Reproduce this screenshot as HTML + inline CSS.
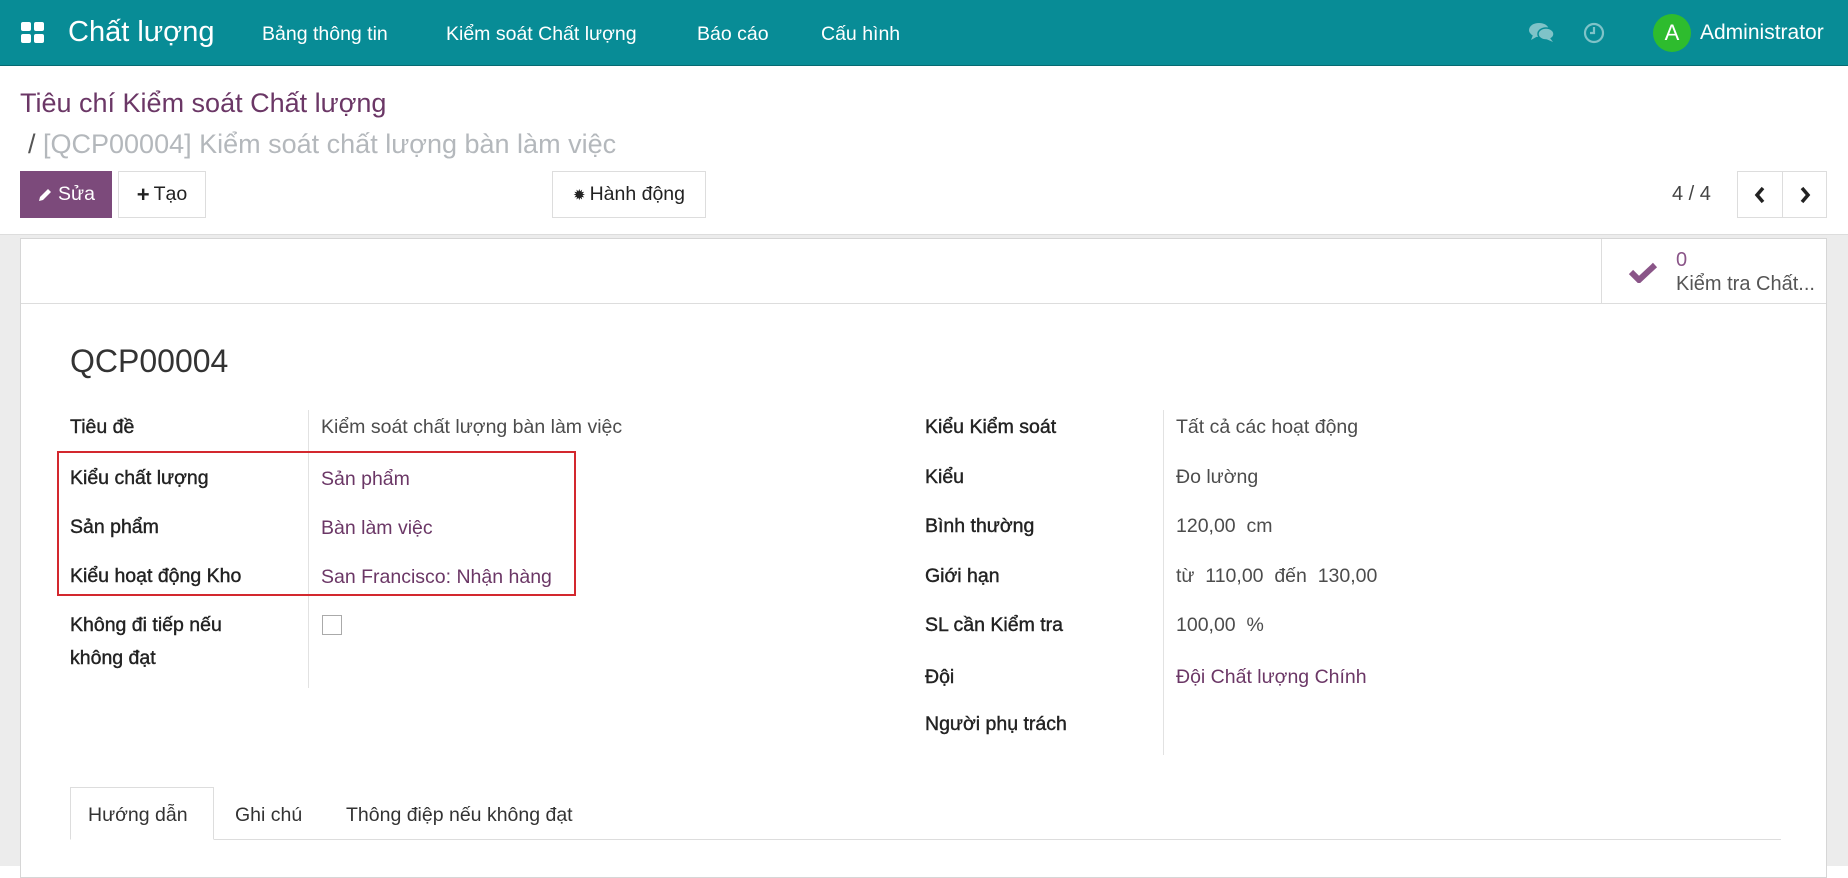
<!DOCTYPE html>
<html><head><meta charset="utf-8">
<style>
*{box-sizing:border-box;margin:0;padding:0}
body{width:1848px;height:866px;overflow:hidden;font-family:"Liberation Sans",sans-serif;background:#fff;color:#4c4c4c;position:relative}
.abs{position:absolute;white-space:nowrap}
.nav{position:absolute;left:0;top:0;width:1848px;height:66px;background:#088c96;border-bottom:1px solid #066a72}
.nav .t{position:absolute;color:#fff;font-size:19.5px;top:23px}
.bg{position:absolute;left:0;top:234px;width:1848px;height:632px;background:#ececec;border-top:1px solid #ddd}
.sheet{position:absolute;left:20px;top:238px;width:1807px;height:640px;background:#fff;border:1px solid #d6d6d6}
.btn{position:absolute;top:171px;height:47px;border:1px solid #ddd;background:#fff;font-size:19.5px;color:#222;display:flex;align-items:center;justify-content:center}
.lbl{position:absolute;font-size:19.5px;color:#222;white-space:nowrap;-webkit-text-stroke:0.4px #222}
.val{position:absolute;font-size:19.5px;color:#4c4c4c;white-space:nowrap}
.lnk{color:#6b3766}
</style></head><body>
<div class="nav">
  <svg class="abs" style="left:21px;top:22px" width="24" height="22" viewBox="0 0 24 22"><rect x="0" y="0" width="10" height="9" rx="2" fill="#fff"/><rect x="13" y="0" width="10" height="9" rx="2" fill="#fff"/><rect x="0" y="12" width="10" height="9" rx="2" fill="#fff"/><rect x="13" y="12" width="10" height="9" rx="2" fill="#fff"/></svg>
  <div class="t" style="left:68px;top:16px;font-size:29px">Chất lượng</div>
  <div class="t" style="left:262px">Bảng thông tin</div>
  <div class="t" style="left:446px">Kiểm soát Chất lượng</div>
  <div class="t" style="left:697px">Báo cáo</div>
  <div class="t" style="left:821px">Cấu hình</div>
  <svg class="abs" style="left:1529px;top:22px" width="26" height="22" viewBox="0 0 26 22"><ellipse cx="10" cy="8" rx="10" ry="7" fill="#7fc3c8"/><path d="M4 13 L2 18 L9 14Z" fill="#7fc3c8"/><ellipse cx="17" cy="12" rx="8" ry="6" fill="#7fc3c8" stroke="#088c96" stroke-width="1.5"/><path d="M21 16 L24 20 L17 17Z" fill="#7fc3c8"/></svg>
  <svg class="abs" style="left:1583px;top:22px" width="22" height="22" viewBox="0 0 22 22"><circle cx="11" cy="11" r="9" fill="none" stroke="#7fc3c8" stroke-width="2.2"/><path d="M11 5 V11 H7" fill="none" stroke="#7fc3c8" stroke-width="2.2"/></svg>
  <div class="abs" style="left:1653px;top:14px;width:38px;height:38px;border-radius:50%;background:#2ebc2e;color:#fff;font-size:22px;text-align:center;line-height:38px">A</div>
  <div class="t" style="left:1700px;top:21px;font-size:21px">Administrator</div>
</div>
<div class="abs" style="left:20px;top:88px;font-size:27px;color:#6b3766">Tiêu chí Kiểm soát Chất lượng</div>
<div class="abs" style="left:28px;top:129px;font-size:27px;color:#b4b8bc"><span style="color:#555">/</span> [QCP00004] Kiểm soát chất lượng bàn làm việc</div>
<div class="btn" style="left:20px;width:92px;background:#7c4a7b;border-color:#7c4a7b;color:#fff"><svg width="16" height="16" viewBox="0 0 16 16" style="margin-right:5px"><path d="M2 14 L3 10 L11 2 L14 5 L6 13Z" fill="#fff"/></svg>Sửa</div>
<div class="btn" style="left:118px;width:88px"><span style="font-size:22px;font-weight:bold;margin-right:4px">+</span>Tạo</div>
<div class="btn" style="left:552px;width:154px"><span style="font-size:15px;margin-right:4px">✹</span>Hành động</div>
<div class="abs" style="left:1672px;top:183px;font-size:20px;color:#444">4 / 4</div>
<div class="btn" style="left:1737px;width:46px"><svg width="14" height="18" viewBox="0 0 14 18"><path d="M10 2 L4 9 L10 16" fill="none" stroke="#222" stroke-width="3.5"/></svg></div>
<div class="btn" style="left:1782px;width:45px"><svg width="14" height="18" viewBox="0 0 14 18"><path d="M4 2 L10 9 L4 16" fill="none" stroke="#222" stroke-width="3.5"/></svg></div>
<div class="bg"></div>
<div class="sheet">
  <div class="abs" style="left:0;top:64px;width:1805px;border-top:1px solid #ddd"></div>
  <div class="abs" style="left:1580px;top:0;height:64px;border-left:1px solid #ddd"></div>
  <svg class="abs" style="left:1607px;top:22px" width="30" height="22" viewBox="0 0 30 22"><path d="M3 11 L11 19 L27 4" fill="none" stroke="#8a5588" stroke-width="6"/></svg>
  <div class="abs" style="left:1655px;top:10px;font-size:20px;color:#8a5588">0</div>
  <div class="abs" style="left:1655px;top:34px;font-size:20px;color:#555">Kiểm tra Chất...</div>
  <div class="abs" style="left:49px;top:104px;font-size:32px;color:#333">QCP00004</div>
  <div class="abs" style="left:287px;top:171px;height:278px;border-left:1px solid #e2e2e2"></div>
  <div class="abs" style="left:1142px;top:171px;height:345px;border-left:1px solid #e2e2e2"></div>
  <div class="lbl" style="left:49px;top:177px">Tiêu đề</div>
  <div class="val" style="left:300px;top:177px">Kiểm soát chất lượng bàn làm việc</div>
  <div class="lbl" style="left:49px;top:228px">Kiểu chất lượng</div>
  <div class="val lnk" style="left:300px;top:229px">Sản phẩm</div>
  <div class="lbl" style="left:49px;top:277px">Sản phẩm</div>
  <div class="val lnk" style="left:300px;top:278px">Bàn làm việc</div>
  <div class="lbl" style="left:49px;top:326px">Kiểu hoạt động Kho</div>
  <div class="val lnk" style="left:300px;top:327px">San Francisco: Nhận hàng</div>
  <div class="lbl" style="left:49px;top:375px">Không đi tiếp nếu</div>
  <div class="lbl" style="left:49px;top:408px">không đạt</div>
  <div class="abs" style="left:301px;top:376px;width:20px;height:20px;border:1px solid #aaa"></div>
  <div class="abs" style="left:36px;top:212px;width:519px;height:145px;border:2px solid #d3282e"></div>
  <div class="lbl" style="left:904px;top:177px">Kiểu Kiểm soát</div>
  <div class="val" style="left:1155px;top:177px">Tất cả các hoạt động</div>
  <div class="lbl" style="left:904px;top:227px">Kiểu</div>
  <div class="val" style="left:1155px;top:227px">Đo lường</div>
  <div class="lbl" style="left:904px;top:276px">Bình thường</div>
  <div class="val" style="left:1155px;top:276px">120,00&nbsp; cm</div>
  <div class="lbl" style="left:904px;top:326px">Giới hạn</div>
  <div class="val" style="left:1155px;top:326px">từ&nbsp; 110,00&nbsp; đến&nbsp; 130,00</div>
  <div class="lbl" style="left:904px;top:375px">SL cần Kiểm tra</div>
  <div class="val" style="left:1155px;top:375px">100,00&nbsp; %</div>
  <div class="lbl" style="left:904px;top:427px">Đội</div>
  <div class="val lnk" style="left:1155px;top:427px">Đội Chất lượng Chính</div>
  <div class="lbl" style="left:904px;top:474px">Người phụ trách</div>
  <div class="abs" style="left:49px;top:600px;width:1711px;border-top:1px solid #ddd"></div>
  <div class="abs" style="left:49px;top:548px;width:144px;height:53px;border:1px solid #ddd;border-bottom:1px solid #fff;background:#fff"></div>
  <div class="val" style="left:67px;top:565px;color:#333">Hướng dẫn</div>
  <div class="val" style="left:214px;top:565px;color:#333">Ghi chú</div>
  <div class="val" style="left:325px;top:565px;color:#333">Thông điệp nếu không đạt</div>
</div>
</body></html>
